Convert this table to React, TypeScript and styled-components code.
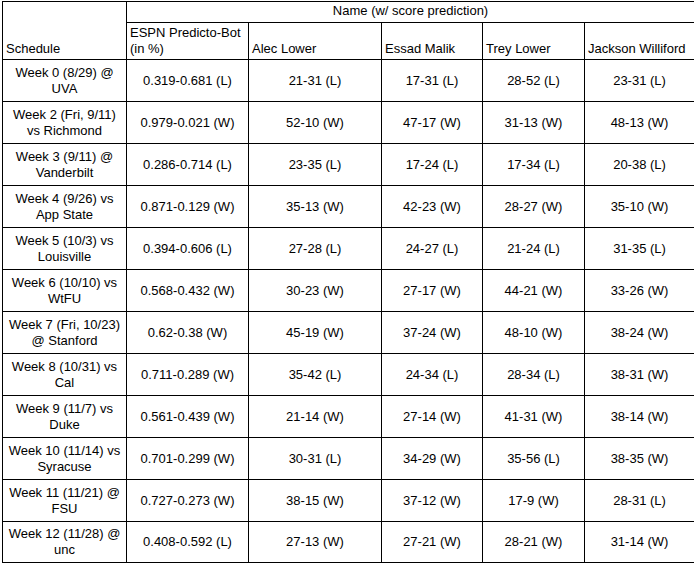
import React from "react";
import styled, { createGlobalStyle } from "styled-components";

//////////////////////// DATA ////////////////////////

interface Game {
  schedule: [string, string];
  espn: string;
  picks: string[];
}

const PICKERS = [`Alec Lower`, `Essad Malik`, `Trey Lower`, `Jackson Williford`];

const GAMES: Game[] = [
  { schedule: [`Week 0 (8/29) @`, `UVA`], espn: `0.319-0.681 (L)`, picks: [`21-31 (L)`, `17-31 (L)`, `28-52 (L)`, `23-31 (L)`] },
  { schedule: [`Week 2 (Fri, 9/11)`, `vs Richmond`], espn: `0.979-0.021 (W)`, picks: [`52-10 (W)`, `47-17 (W)`, `31-13 (W)`, `48-13 (W)`] },
  { schedule: [`Week 3 (9/11) @`, `Vanderbilt`], espn: `0.286-0.714 (L)`, picks: [`23-35 (L)`, `17-24 (L)`, `17-34 (L)`, `20-38 (L)`] },
  { schedule: [`Week 4 (9/26) vs`, `App State`], espn: `0.871-0.129 (W)`, picks: [`35-13 (W)`, `42-23 (W)`, `28-27 (W)`, `35-10 (W)`] },
  { schedule: [`Week 5 (10/3) vs`, `Louisville`], espn: `0.394-0.606 (L)`, picks: [`27-28 (L)`, `24-27 (L)`, `21-24 (L)`, `31-35 (L)`] },
  { schedule: [`Week 6 (10/10) vs`, `WtFU`], espn: `0.568-0.432 (W)`, picks: [`30-23 (W)`, `27-17 (W)`, `44-21 (W)`, `33-26 (W)`] },
  { schedule: [`Week 7 (Fri, 10/23)`, `@ Stanford`], espn: `0.62-0.38 (W)`, picks: [`45-19 (W)`, `37-24 (W)`, `48-10 (W)`, `38-24 (W)`] },
  { schedule: [`Week 8 (10/31) vs`, `Cal`], espn: `0.711-0.289 (W)`, picks: [`35-42 (L)`, `24-34 (L)`, `28-34 (L)`, `38-31 (W)`] },
  { schedule: [`Week 9 (11/7) vs`, `Duke`], espn: `0.561-0.439 (W)`, picks: [`21-14 (W)`, `27-14 (W)`, `41-31 (W)`, `38-14 (W)`] },
  { schedule: [`Week 10 (11/14) vs`, `Syracuse`], espn: `0.701-0.299 (W)`, picks: [`30-31 (L)`, `34-29 (W)`, `35-56 (L)`, `38-35 (W)`] },
  { schedule: [`Week 11 (11/21) @`, `FSU`], espn: `0.727-0.273 (W)`, picks: [`38-15 (W)`, `37-12 (W)`, `17-9 (W)`, `28-31 (L)`] },
  { schedule: [`Week 12 (11/28) @`, `unc`], espn: `0.408-0.592 (L)`, picks: [`27-13 (W)`, `27-21 (W)`, `28-21 (W)`, `31-14 (W)`] },
];

const COL_WIDTHS = [124, 122, 133, 101, 102, 110];

//////////////////////// STYLED-COMPONENTS ////////////////////////

const GlobalStyle = createGlobalStyle`
  html, body {
    margin: 0;
    background: #fff;
  }
`;

const Page = styled.div`
  padding: 1px 0 0 2px;
  font-family: "Liberation Sans", Arial, sans-serif;
  font-size: 13px;
  color: #000;
`;

const Sheet = styled.table`
  border-collapse: collapse;
  table-layout: fixed;
  width: 692px;
`;

const HeadRow = styled.tr<{ $h: number }>`
  height: ${(p) => p.$h}px;
`;

const BodyRow = styled.tr<{ $last?: boolean }>`
  height: ${(p) => (p.$last ? 41 : 42)}px;
`;

const HeadCell = styled.th<{ $center?: boolean }>`
  border: 1px solid #000;
  padding: 0 3px 2px;
  font-weight: normal;
  text-align: ${(p) => (p.$center ? `center` : `left`)};
  vertical-align: ${(p) => (p.$center ? `middle` : `bottom`)};
  line-height: 16px;
  white-space: nowrap;
  overflow: hidden;
`;

const Cell = styled.td`
  border: 1px solid #000;
  padding: 0 3px;
  text-align: center;
  vertical-align: middle;
  line-height: 16px;
  white-space: nowrap;
  overflow: hidden;
`;

//////////////////////// COMPONENT ////////////////////////

const App = () => {
  return (
    <>
      <GlobalStyle />
      <Page>
        <Sheet>
          <colgroup>
            {COL_WIDTHS.map((w, i) => (
              <col key={i} style={{ width: w }} />
            ))}
          </colgroup>
          <thead>
            <HeadRow $h={21}>
              <HeadCell rowSpan={2}>Schedule</HeadCell>
              <HeadCell colSpan={5} $center>
                Name (w/ score prediction)
              </HeadCell>
            </HeadRow>
            <HeadRow $h={37}>
              <HeadCell>
                ESPN Predicto-Bot
                <br />
                (in %)
              </HeadCell>
              {PICKERS.map((name) => (
                <HeadCell key={name}>{name}</HeadCell>
              ))}
            </HeadRow>
          </thead>
          <tbody>
            {GAMES.map((g, i) => (
              <BodyRow key={g.schedule[0]} $last={i === GAMES.length - 1}>
                <Cell>
                  {g.schedule[0]}
                  <br />
                  {g.schedule[1]}
                </Cell>
                <Cell>{g.espn}</Cell>
                {g.picks.map((p, j) => (
                  <Cell key={j}>{p}</Cell>
                ))}
              </BodyRow>
            ))}
          </tbody>
        </Sheet>
      </Page>
    </>
  );
};

//////////////////////// EXPORT ////////////////////////

export default App;
